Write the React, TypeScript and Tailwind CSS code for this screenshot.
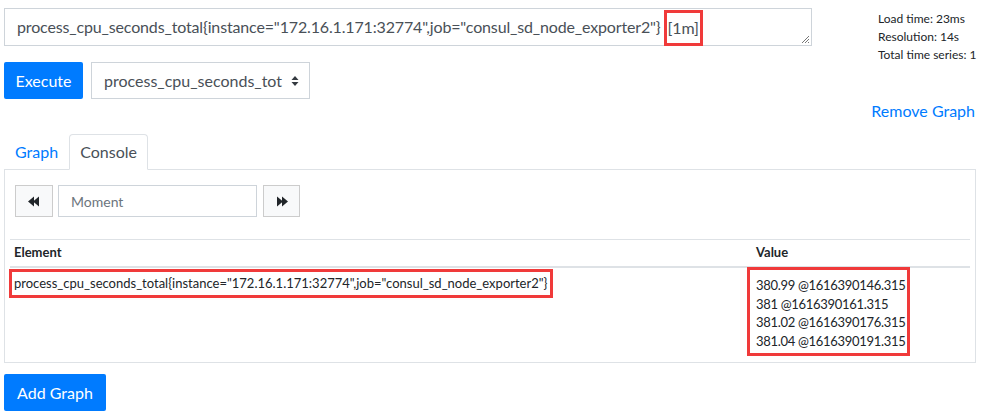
import React from "react";

const FONT = { fontFamily: 'Lato, "Noto Sans", sans-serif' };

function BackIcon({ flip }: { flip?: boolean }) {
  return (
    <svg width="12" height="11" viewBox="0 0 12 11" style={flip ? { transform: "scaleX(-1)" } : undefined}>
      <path d="M0 5.5 L6 0.5 L6 10.5 Z" fill="#212529" />
      <path d="M5 5.5 L11 0.5 L11 10.5 Z" fill="#212529" />
    </svg>
  );
}

export default function App() {
  return (
    <div className="w-[981px] h-[416px] bg-white overflow-hidden text-[#212529]" style={FONT}>
      {/* Top */}
      <div className="flex pt-[8px]">
        <div className="ml-[4px] w-[808px]">
          <div className="h-[38px] border border-[#ced4da] relative pl-[12px] flex items-center text-[16px] text-[#495057] whitespace-nowrap tracking-[-0.15px]">
            <span>process_cpu_seconds_total{"{"}instance="172.16.1.171:32774",job="consul_sd_node_exporter2"{"}"}</span>
            <span className="ml-[3px] h-[36px] border-[3px] border-[#f03a3a] px-[1px] flex items-center translate-y-[1px]">[1m]</span>
            <svg className="absolute right-[1px] bottom-[1px]" width="9" height="9" viewBox="0 0 9 9">
              <path d="M8 1 L1 8 M8 4 L4 8 M8 7 L7 8" stroke="#777" strokeWidth="1" />
            </svg>
          </div>
          <div className="flex mt-[16px] gap-[8px]">
            <button className="w-[79px] h-[37px] bg-[#007bff] text-white text-[16px] rounded-[2px]">Execute</button>
            <div className="w-[219px] h-[37px] border border-[#ced4da] flex items-center pl-[12px] pr-[10px] text-[16px] text-[#495057]">
              <span className="flex-1 overflow-hidden whitespace-nowrap">process_cpu_seconds_tot</span>
              <svg width="8" height="12" viewBox="0 0 8 12" className="ml-[4px]">
                <path d="M4 1 L7.5 5 L0.5 5 Z M4 11 L7.5 7 L0.5 7 Z" fill="#343a40" />
              </svg>
            </div>
          </div>
        </div>
        <div className="ml-[66px] pt-[2px] text-[12px] leading-[18px] text-[#212529]">
          <div>Load time: 23ms</div>
          <div>Resolution: 14s</div>
          <div>Total time series: 1</div>
        </div>
      </div>

      {/* Remove graph */}
      <div className="flex justify-end pr-[6px] text-[16px] leading-[24px] text-[#007bff]">Remove Graph</div>

      {/* Tabs */}
      <div className="flex mt-[11px] ml-[4px] w-[972px] h-[36px] text-[16px] border-b border-[#dee2e6]">
        <div className="px-[11px] flex items-center text-[#007bff]">Graph</div>
        <div className="w-[79px] h-[36px] border border-[#dee2e6] border-b-white rounded-t-[4px] bg-white flex items-center justify-center text-[#495057]">Console</div>
      </div>

      {/* Panel */}
      <div className="ml-[4px] w-[972px] h-[193px] border border-t-0 border-[#dee2e6] pt-[15px]">
        <div className="flex ml-[10px] h-[32px]">
          <button className="w-[38px] h-[32px] bg-[#f8f9fa] border border-[#ccc] flex items-center justify-center">
            <BackIcon />
          </button>
          <div className="ml-[5px] w-[199px] h-[32px] border border-[#ced4da] flex items-center pl-[12px] text-[14px] text-[#6c757d]">Moment</div>
          <button className="ml-[6px] w-[37px] h-[32px] bg-[#f8f9fa] border border-[#ccc] flex items-center justify-center">
            <BackIcon flip />
          </button>
        </div>

        <div className="ml-[5px] mt-[22px] w-[960px] text-[13px]">
          <div className="flex border-t border-[#dee2e6] border-b-2 h-[29px] items-center">
            <div className="w-[742px] pl-[4px] font-bold">Element</div>
            <div className="pl-[4px] font-bold">Value</div>
          </div>
          <div className="flex">
            <div className="w-[742px]">
              <span className="inline-block border-[3px] border-[#f03a3a] mt-[1px] -ml-[1px] px-[2px] h-[29px] leading-[22px] whitespace-nowrap">
                process_cpu_seconds_total{"{"}instance="172.16.1.171:32774",job="consul_sd_node_exporter2"{"}"}
              </span>
            </div>
            <div>
              <div className="inline-block border-[3px] border-[#f03a3a] -mt-[1px] -ml-[5px] pl-[6px] pr-[2px] pt-[6px] pb-[2px] leading-[18.7px] whitespace-nowrap tracking-[-0.3px]">
                <div>380.99 @1616390146.315</div>
                <div>381 @1616390161.315</div>
                <div>381.02 @1616390176.315</div>
                <div>381.04 @1616390191.315</div>
              </div>
            </div>
          </div>
        </div>
      </div>

      <button className="ml-[4px] mt-[11px] w-[102px] h-[37px] bg-[#007bff] text-white text-[16px] rounded-[2px]">Add Graph</button>
    </div>
  );
}
